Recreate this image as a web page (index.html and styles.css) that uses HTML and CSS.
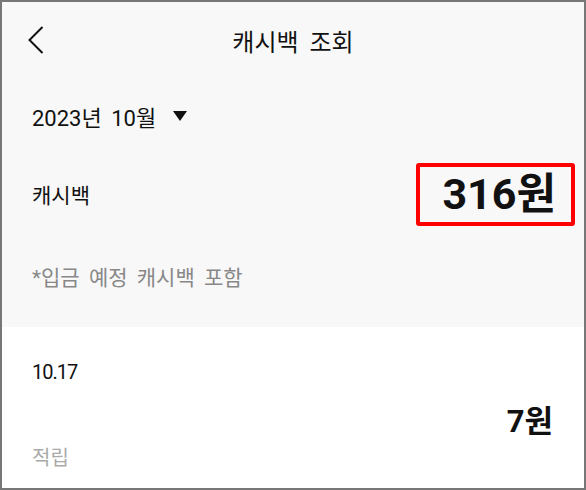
FILE: index.html
```html
<!DOCTYPE html>
<html lang="ko">
<head>
  <meta charset="UTF-8">
  <meta name="viewport" content="width=device-width, initial-scale=1.0">
  <title>캐시백 조회</title>
  <link rel="stylesheet" href="styles.css">
</head>
<body>
  <div class="screen">
    <div class="top">
      <header class="header">
        <button class="back" aria-label="뒤로">
          <svg width="16" height="28" viewBox="0 0 16 28">
            <polyline points="14.5,1 1.5,14 14.5,27" fill="none" stroke="#111" stroke-width="2"/>
          </svg>
        </button>
        <h1>캐시백 조회</h1>
        <span></span>
      </header>

      <div class="month">
        <span>2023년 10월</span>
        <span class="caret"></span>
      </div>

      <div class="summary">
        <span class="label">캐시백</span>
        <span class="total">316원</span>
      </div>

      <p class="note">*입금 예정 캐시백 포함</p>
    </div>

    <ul class="list">
      <li class="item">
        <div class="info">
          <span class="date">10.17</span>
          <span class="type">적립</span>
        </div>
        <span class="amount">7원</span>
      </li>
    </ul>
  </div>
</body>
</html>
```

FILE: styles.css
```css
* {
  box-sizing: border-box;
}

body {
  margin: 0;
  font-family: Roboto, "Noto Sans CJK KR", sans-serif;
  color: #111;
  background: #fff;
}

.screen {
  width: 586px;
  height: 490px;
  border: 2px solid #777;
  overflow: hidden;
  background: #fff;
}

.top {
  background: #f8f8f8;
  height: 325px;
}

.header {
  display: grid;
  grid-template-columns: 1fr auto 1fr;
  align-items: center;
  height: 80px;
  padding-bottom: 4px;
}

.back {
  justify-self: start;
  margin-left: 26px;
  padding: 0;
  border: none;
  background: none;
  display: flex;
}

.header h1 {
  margin: 0;
  font-size: 24px;
  font-weight: 400;
  word-spacing: 5px;
}

.month {
  display: flex;
  align-items: center;
  height: 70px;
  padding: 0 0 3px 30px;
  font-size: 22px;
  word-spacing: 4px;
}

.caret {
  width: 0;
  height: 0;
  margin-left: 17px;
  border-left: 7.5px solid transparent;
  border-right: 7.5px solid transparent;
  border-top: 10px solid #111;
}

.summary {
  display: flex;
  align-items: center;
  justify-content: space-between;
  height: 84px;
  padding: 0 9px 0 30px;
}

.label {
  font-size: 21px;
}

.total {
  border: 4px solid #f00;
  border-radius: 3px;
  padding: 2px 15px 2px 22px;
  font-size: 43px;
  font-weight: 700;
  line-height: 51px;
}

.note {
  margin: 0;
  padding: 25px 0 0 30px;
  font-size: 21px;
  word-spacing: 4px;
  color: #888;
}

.list {
  list-style: none;
  margin: 0;
  padding: 0;
}

.item {
  display: flex;
  justify-content: space-between;
  padding: 30px 31px 0 30px;
}

.info {
  display: flex;
  flex-direction: column;
  gap: 56px;
}

.date {
  font-size: 20px;
  line-height: 30px;
  letter-spacing: -1px;
}

.type {
  font-size: 20px;
  line-height: 30px;
  color: #aaa;
}

.amount {
  align-self: center;
  margin-top: 6px;
  font-size: 31px;
  font-weight: 700;
}
```
